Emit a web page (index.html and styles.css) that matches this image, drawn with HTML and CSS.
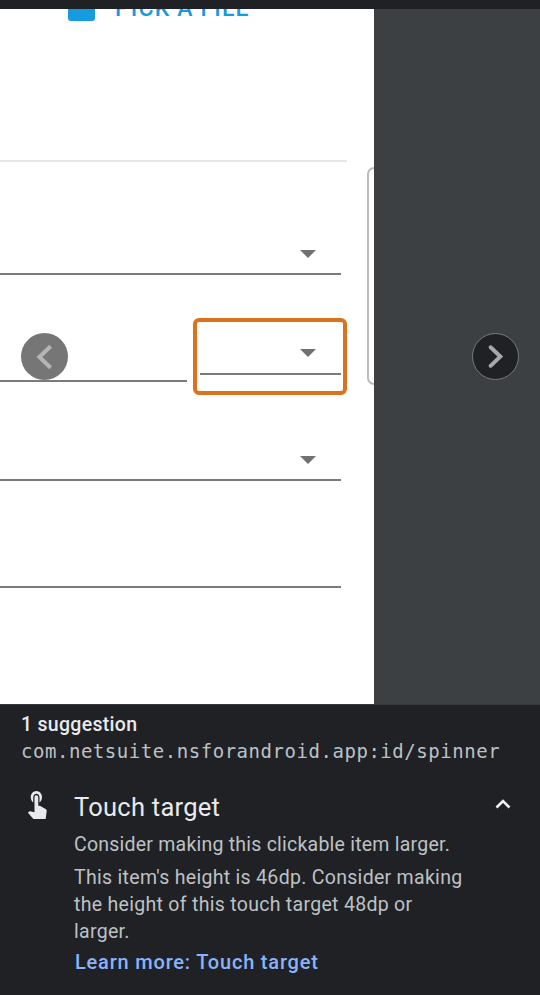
FILE: index.html
```html
<!DOCTYPE html>
<html lang="en">
<head>
<meta charset="utf-8">
<title>Accessibility suggestion</title>
<link rel="stylesheet" href="styles.css">
</head>
<body>
<div class="topbar"></div>
<main class="preview">
  <div class="screen">
    <div class="form">
      <div class="upload"><div class="pick"><span class="file-icon"></span><span class="pick-text">PICK A FILE</span></div></div>
      <div class="field first"><svg class="arrow" viewBox="0 0 16 8"><path d="M0 0h16L8 8z"/></svg></div>
      <div class="split">
        <div class="field date"></div>
        <div class="highlight"><div class="field target"><svg class="arrow" viewBox="0 0 16 8"><path d="M0 0h16L8 8z"/></svg></div></div>
      </div>
      <div class="field third"><svg class="arrow" viewBox="0 0 16 8"><path d="M0 0h16L8 8z"/></svg></div>
      <div class="field fourth"></div>
    </div>
    <div class="card-edge"></div>
  </div>
  <button class="nav prev" aria-label="Previous"><svg viewBox="0 0 46 46"><path d="M29 13L18 23.500L29 34"/></svg></button>
  <button class="nav next" aria-label="Next"><svg viewBox="0 0 46 46"><path d="M18 13.500L28 23L18 32.500"/></svg></button>
</main>
<section class="panel">
  <h1><span>1 suggestion</span></h1>
  <p class="resource"><span>com.netsuite.nsforandroid.app:id/spinner</span></p>
  <article class="suggestion">
    <svg class="touch" viewBox="4 3 16 20" preserveAspectRatio="none"><path d="M9 11.240V7.500C9 6.120 10.120 5 11.500 5S14 6.120 14 7.500v3.740c1.210-.810 2-2.180 2-3.740C16 5.010 13.990 3 11.500 3S7 5.010 7 7.500c0 1.560.790 2.930 2 3.740zm9.840 4.630l-4.540-2.260c-.170-.070-.350-.110-.540-.110H13v-6c0-.830-.670-1.500-1.500-1.500S10 6.670 10 7.500v10.740l-3.430-.720c-.080-.010-.150-.030-.240-.030-.310 0-.590.130-.790.330l-.790.800 4.940 4.940c.270.270.650.440 1.060.440h6.790c.750 0 1.330-.550 1.440-1.280l.750-5.270c.010-.070.020-.140.020-.200 0-.620-.380-1.160-.910-1.380z"/></svg>
    <div class="body">
      <h2><span>Touch target</span></h2>
      <p class="summary"><span>Consider making this clickable item larger.</span></p>
      <p class="detail"><span>This item's height is 46dp. Consider making</span><br><span>the height of this touch target 48dp or</span><br><span>larger.</span></p>
      <a class="link">Learn more: Touch target</a>
    </div>
    <svg class="collapse" viewBox="0 0 16 10"><path d="M1.500 8.500L8 2l6.500 6.500"/></svg>
  </article>
</section>
</body>
</html>
```
FILE: styles.css
```css
* { box-sizing: border-box; }
body { margin: 0; width: 540px; height: 995px; overflow: hidden; background: #202124; font-family: Roboto, sans-serif; }
h1, h2, p { margin: 0; }
.topbar { height: 9px; background: #202124; }
.preview { position: relative; height: 695px; background: #3c4043; }
.screen { display: flex; width: 374px; height: 695px; overflow: hidden; background: #fff; }
.form { width: 347px; flex: none; }
.upload { height: 153px; border-bottom: 2px solid #e6e6e6; overflow: hidden; }
.pick { display: flex; align-items: flex-end; gap: 20px; height: 24px; margin-top: -12px; padding-left: 68px; color: #159bde; }
.file-icon { width: 27px; height: 26px; border-radius: 3px; background: #159bde; }
.pick-text { font-size: 23px; font-weight: 500; line-height: 24px; letter-spacing: 1.15px; white-space: nowrap; }
.field { width: 341px; border-bottom: 2px solid #7b7b7b; }
.arrow { display: block; width: 16px; height: 8px; margin-left: auto; margin-right: 25px; fill: #707070; }
.first { height: 113px; padding-top: 88px; }
.split { display: flex; height: 107px; }
.date { width: 187px; height: 107px; }
.highlight { width: 154px; height: 77px; flex: none; margin: 43px 0 0 6px; border: 4px solid #dc731c; border-radius: 6px; padding: 27px 2px 0 3px; }
.target { width: 141px; height: 26px; }
.third { height: 99px; padding-top: 74px; }
.fourth { height: 107px; }
.card-edge { flex: none; width: 20px; height: 218px; margin: 158px 0 0 20px; border: 2px solid #bbb; border-radius: 7px; }
.nav { position: absolute; top: 324px; width: 47px; height: 47px; padding: 0; border: 0; border-radius: 50%; }
.nav svg { display: block; width: 100%; height: 100%; fill: none; stroke-width: 4; }
.prev { left: 21px; background: #767676; }
.prev svg { stroke: #b4b4b4; }
.next { left: 472px; background: #202124; border: 1px solid #77797b; }
.next svg { stroke: #a8a8a8; stroke-linecap: round; }
.panel { height: 291px; padding-top: 8px; border-top: 1px solid #35373a; color: #e8eaed; }
h1 { margin-left: 21px; font-size: 19.5px; font-weight: 500; line-height: 23px; letter-spacing: .3px; }
.resource { margin: 2px 0 0 21px; color: #bdc1c6; font: 19px/26px "DejaVu Sans Mono", monospace; letter-spacing: .54px; white-space: nowrap; }
.suggestion { display: flex; margin-top: 27px; }
.touch { width: 20px; height: 28px; margin: 0 0 0 27px; fill: #e8eaed; }
.body { width: 410px; margin-left: 27px; color: #bdc1c6; white-space: nowrap; }
h2 { color: #e8eaed; font-size: 25.500px; font-weight: 400; line-height: 32px; letter-spacing: .25px; }
.summary, .detail { font-size: 19.500px; line-height: 27px; }
.summary { margin-top: 8px; letter-spacing: .23px; }
.detail { margin-top: 6px; letter-spacing: .3px; }
.link { display: block; margin: 4px 0 0 1px; color: #8ab4f8; font-size: 20px; font-weight: 500; line-height: 27px; letter-spacing: .8px; }
.collapse { width: 16px; height: 10px; margin: 8px 0 0 11px; fill: none; stroke: #f1f1f1; stroke-width: 2.600; }
```
